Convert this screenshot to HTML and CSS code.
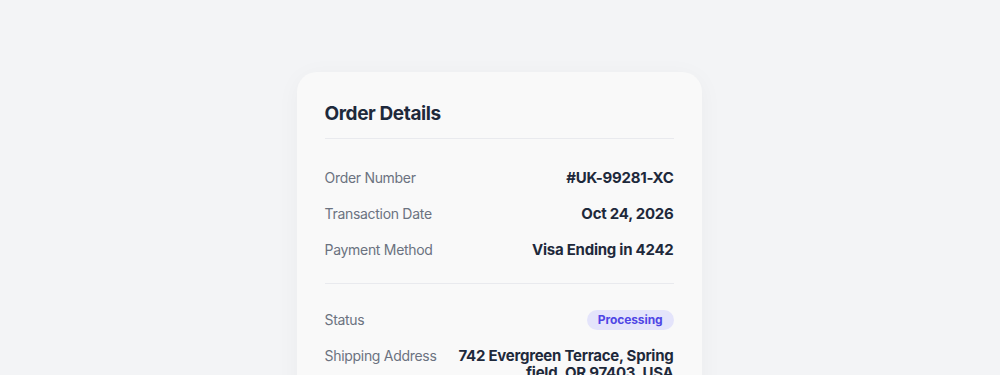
FILE: index.html
```html
<!DOCTYPE html>
<html lang="en">
<head>
  <meta charset="UTF-8">
  <meta name="viewport" content="width=device-width, initial-scale=1">
  <title>Order Details</title>
  <link rel="stylesheet" href="styles.css">
</head>
<body>

<!-- Order summary card -->
<section class="card">
  <h2 class="card-title">Order Details</h2>

  <div class="group">
    <div class="row">
      <span class="label">Order Number</span>
      <span class="value">#UK-99281-XC</span>
    </div>
    <div class="row">
      <span class="label">Transaction Date</span>
      <span class="value">Oct 24, 2026</span>
    </div>
    <div class="row">
      <span class="label">Payment Method</span>
      <span class="value">Visa Ending in 4242</span>
    </div>
  </div>

  <div class="group">
    <div class="row">
      <span class="label">Status</span>
      <span class="badge">Processing</span>
    </div>
    <div class="row">
      <span class="label">Shipping Address</span>
      <span class="value address">742 Evergreen Terrace, Springfield, OR 97403, USA</span>
    </div>
  </div>
</section>

</body>
</html>
```

FILE: styles.css
```css
body {
  margin: 0;
  font-family: Inter, 'Noto Sans', sans-serif;
  background: #f3f4f6;
  color: #1e293b;
}

.card {
  width: 405px;
  box-sizing: border-box;
  margin: 72px auto 0;
  padding: 30px 28px 20px;
  background: #f9f9f9;
  border-radius: 20px;
  box-shadow: 0 4px 24px rgba(15, 23, 42, 0.04);
  transform: translateX(-1px);
}

.card-title {
  margin: 0;
  padding-bottom: 13px;
  font-size: 19px;
  font-weight: 700;
  letter-spacing: -0.4px;
  border-bottom: 1px solid #e9eaee;
}

.group {
  padding: 21px 0 15px;
  border-bottom: 1px solid #e9eaee;
}

.group + .group {
  padding-top: 18px;
}

.group:last-child {
  border-bottom: none;
}

.row {
  display: flex;
  justify-content: space-between;
  align-items: flex-start;
  gap: 16px;
  padding: 8px 0;
  line-height: 20px;
}

.label {
  font-size: 14px;
  letter-spacing: -0.3px;
  color: #6b7280;
  white-space: nowrap;
}

.value {
  font-size: 15px;
  font-weight: 700;
  letter-spacing: -0.25px;
  text-align: right;
}

.address {
  max-width: 218px;
  margin-top: 1px;
  line-height: 17px;
  word-break: break-all;
}

.badge {
  padding: 0 11px;
  font-size: 12px;
  font-weight: 700;
  letter-spacing: -0.1px;
  color: #4f46e5;
  background: #e4e4fb;
  border-radius: 999px;
}
```
